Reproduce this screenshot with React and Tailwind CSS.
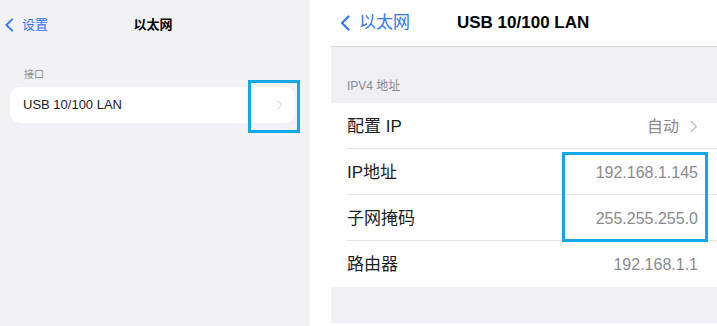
import React from "react";

const font = {
  fontFamily:
    '"Liberation Sans", "Noto Sans CJK SC", Arial, sans-serif',
};

const Chevron = ({ className, dir = "right", strokeWidth = 2 }) => (
  <svg
    viewBox="0 0 10 16"
    fill="none"
    stroke="currentColor"
    strokeWidth={strokeWidth}
    strokeLinecap="round"
    strokeLinejoin="round"
    className={className}
  >
    {dir === "right" ? (
      <path d="M2 1.5 8.5 8 2 14.5" />
    ) : (
      <path d="M8 1.5 1.5 8 8 14.5" />
    )}
  </svg>
);

const Row = ({ label, value, chevron, last }) => (
  <div className="flex h-[46px] items-center pl-4">
    <div
      className={
        "flex h-full flex-1 items-center pr-[19px] pt-[2px] " +
        (last ? "" : "border-b border-[#e4e4e8]")
      }
    >
      <span className="flex-1 text-[17px] text-[#1c1c1e]">{label}</span>
      <span className="text-[16px] text-[#8a8a8e]">{value}</span>
      {chevron && <Chevron className="ml-[10px] h-[13px] w-[9px] text-[#c4c4c8]" strokeWidth={1.8} />}
    </div>
  </div>
);

const App = () => {
  return (
    <div className="flex h-[326px] w-[717px] bg-white" style={font}>
      {/* left: 以太网 */}
      <div className="relative h-full w-[310px] bg-[#f1f1f6]">
        <div className="grid h-[50px] grid-cols-[1fr_auto_1fr] items-center">
          <div className="flex items-center pl-[5px] text-[#3478f6]">
            <Chevron dir="left" className="h-[14px] w-[9px]" strokeWidth={2.2} />
            <span className="ml-[8px] text-[13px]">设置</span>
          </div>
          <div className="pr-[4px] text-[13px] font-bold text-black">以太网</div>
          <div />
        </div>
        <div className="pl-[24px] pt-[17px] text-[10px] text-[#8a8a8e]">接口</div>
        <div className="relative mx-[10px] mt-[5px] flex h-[36px] w-[285px] items-center rounded-[10px] bg-white pl-[13px] pr-[12px]">
          <span className="flex-1 text-[13px] text-[#1c1c1e]">USB 10/100 LAN</span>
          <Chevron className="h-[10px] w-[7px] text-[#c4c4c8]" strokeWidth={1.6} />
          <div className="absolute left-[238px] top-[-7px] h-[53px] w-[52px] border-[3px] border-[#12a8e8]" />
        </div>
      </div>

      {/* right: USB 10/100 LAN */}
      <div className="ml-[21px] flex flex-1 flex-col pb-[3px]">
        <div className="flex h-[47px] items-center border-b border-[#d8d8dc] bg-white">
          <div className="flex w-[126px] items-center pl-[9px] text-[#3478f6]">
            <Chevron dir="left" className="h-[16px] w-[11px]" strokeWidth={2.2} />
            <span className="ml-[8px] text-[17px]">以太网</span>
          </div>
          <div className="text-[17px] font-bold text-black">USB 10/100 LAN</div>
        </div>
        <div className="relative flex flex-1 flex-col bg-[#efeff4]">
          <div className="flex h-[56px] items-end pb-[8px] pl-4 text-[12px] text-[#8a8a8e]">
            IPV4 地址
          </div>
          <div className="bg-white">
            <Row label="配置 IP" value="自动" chevron />
            <Row label="IP地址" value="192.168.1.145" />
            <Row label="子网掩码" value="255.255.255.0" />
            <Row label="路由器" value="192.168.1.1" last />
          </div>
          <div className="absolute left-[231px] top-[105px] h-[90px] w-[146px] border-[3px] border-[#12a8e8]" />
        </div>
      </div>
    </div>
  );
};

export default App;
